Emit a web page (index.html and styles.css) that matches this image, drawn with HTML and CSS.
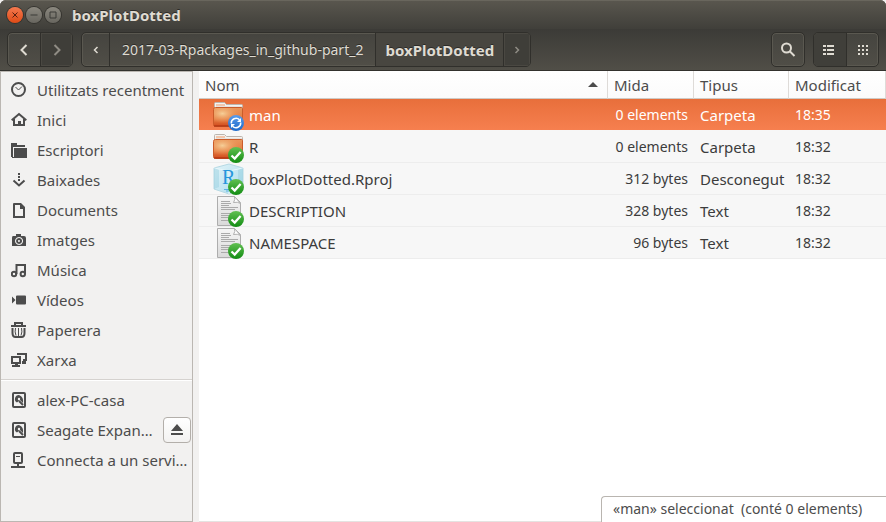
FILE: index.html
```html
<!DOCTYPE html>
<html lang="ca">
<head>
<meta charset="utf-8">
<title>boxPlotDotted</title>
<link rel="stylesheet" href="styles.css">
</head>
<body>
<svg class="defs" aria-hidden="true">
  <defs>
    <linearGradient id="g-front" x1="0" y1="0" x2="0" y2="1"><stop offset="0" stop-color="#e9975c"/><stop offset=".6" stop-color="#e57c42"/><stop offset="1" stop-color="#d04a1c"/></linearGradient>
    <radialGradient id="g-glow" cx=".3" cy=".35" r=".6"><stop offset="0" stop-color="#f5cf98"/><stop offset="1" stop-color="#f0a060" stop-opacity="0"/></radialGradient>
    <linearGradient id="g-green" x1="0" y1="0" x2="0" y2="1"><stop offset="0" stop-color="#62c052"/><stop offset="1" stop-color="#118c12"/></linearGradient>
    <linearGradient id="g-blue" x1="0" y1="0" x2="0" y2="1"><stop offset="0" stop-color="#5a9cec"/><stop offset="1" stop-color="#1e69c8"/></linearGradient>
    <linearGradient id="g-page" x1="0" y1="0" x2="0" y2="1"><stop offset="0" stop-color="#f6f6f6"/><stop offset="1" stop-color="#d9d9d9"/></linearGradient>
    <linearGradient id="g-cube" x1="0" y1="0" x2="1" y2="1"><stop offset="0" stop-color="#e2f3f8"/><stop offset="1" stop-color="#a9dced"/></linearGradient>
    <symbol id="ok" viewBox="0 0 16 16"><circle cx="8" cy="8" r="8" fill="url(#g-green)"/><path d="M3.500 8.500 6.700 11.500 12.600 5" fill="none" stroke="#fff" stroke-width="2.300"/></symbol>
    <symbol id="sync" viewBox="0 0 16 16"><circle cx="8" cy="8" r="8" fill="url(#g-blue)"/><path d="M3.300 8.500A4.800 4.800 0 0 1 11.500 4.700M12.700 7.500A4.800 4.800 0 0 1 4.500 11.300" fill="none" stroke="#fff" stroke-width="1.500"/><path d="M13 3v4H9zM3 13V9h4z" fill="#fff"/></symbol>
    <symbol id="folder" viewBox="0 0 32 32"><path d="M2.500 14V4.500q0-1 1-1h9l2 2h15q1 0 1 1V14" fill="#f4f2ef" stroke="#bcb5ae"/><path d="M4 6h9" stroke="#ef9a6a"/><path d="M4 8h26" stroke="#d9d3cd"/><path d="M1.500 10.500q0-2 2-2h26q1 0 1 1v16q0 2-2 2h-25q-2 0-2-2z" fill="url(#g-front)" stroke="#cb5c2a"/><path d="M2 9h28v16H2z" fill="url(#g-glow)"/><path d="M2 27h28" stroke="#a82a0c"/></symbol>
    <symbol id="page" viewBox="0 0 32 32"><path d="M5.500 1.500h17l6 6v23h-23z" fill="url(#g-page)" stroke="#adadad"/><path d="M22.500 1.500q1 3-1 6 4-1 7 1z" fill="#fff" stroke="#b0b0b0"/><path d="M9 6.500h9M9 8.500h10M9 10.500h8M9 12.500h17M9 14.500h14M9 18.500h15M9 20.500h12M9 22.500h14M9 25.500h9" stroke="#aaa"/></symbol>
    <symbol id="rproj" viewBox="0 0 32 32"><path d="M2 5 17 1l14 4v20l-14 6L2 26z" fill="url(#g-cube)" stroke="#b6d9e4"/><path d="M2 5l15 3 14-3M17 8v23" fill="none" stroke="#e8f7fb"/><path d="M2 5l5 2v17l-5 2zM31 5l-5 2v17l5 1z" fill="#8ecbdd" opacity=".4"/><text x="10" y="21" class="cube-letter">R</text><path d="M12 26.500h6M14 28h3" stroke="#5cb0df"/></symbol>
    <symbol id="disk" viewBox="0 0 16 16"><path fill-rule="evenodd" fill="currentColor" d="M3 0h10q2 0 2 2v12q0 2-2 2H3q-2 0-2-2V2Q1 0 3 0zM3 2v12h10V2z"/><path d="M8 3a4 4 0 0 0-2 7.500l3-2.500 3 3q1-6-4-8z" fill="currentColor"/><circle cx="8" cy="7" r="1.200" fill="#f2f1f0"/><path d="m8 9 4 4" stroke="currentColor" stroke-width="2"/></symbol>
  </defs>
</svg>

<header class="chrome">
  <div class="titlebar">
    <button class="win close" aria-label="Tanca"><svg viewBox="0 0 16 16"><path d="m5.500 5.500 5 5m0-5-5 5"/></svg></button>
    <button class="win" aria-label="Minimitza"><svg viewBox="0 0 16 16"><path d="M4.500 8h7"/></svg></button>
    <button class="win" aria-label="Maximitza"><svg viewBox="0 0 16 16"><path d="M5 5h6v6H5z"/></svg></button>
    <h1>boxPlotDotted</h1>
  </div>
  <nav class="toolbar" aria-label="Navegació">
    <div class="group">
      <button class="square" aria-label="Enrere"><svg viewBox="0 0 16 16"><path class="line" d="M10.500 3 5.500 8l5 5"/></svg></button>
      <button class="square dark" aria-label="Endavant"><svg viewBox="0 0 16 16"><path class="line" d="m5.500 3 5 5-5 5"/></svg></button>
    </div>
    <div class="group path">
      <button class="step" aria-label="Anteriors"><svg viewBox="0 0 16 16"><path class="thin" d="M9.500 5 6.500 8l3 3"/></svg></button>
      <button class="crumb parent">2017-03-Rpackages_in_github-part_2</button>
      <button class="crumb current">boxPlotDotted</button>
      <button class="step dark" aria-label="Següents"><svg viewBox="0 0 16 16"><path class="thin" d="m6.500 5 3 3-3 3"/></svg></button>
    </div>
    <div class="group search"><button class="square" aria-label="Cerca"><svg viewBox="0 0 16 16"><circle cx="6.500" cy="6" r="4.500" class="line"/><path class="line" d="m9.500 9 5 5"/></svg></button></div>
    <div class="group">
      <button class="square pressed" aria-label="Llista"><svg viewBox="0 0 16 16"><path d="M1 3h3v2H1zM5 3h7v2H5zM1 7h3v2H1zM5 7h7v2H5zM1 11h3v2H1zM5 11h7v2H5z"/></svg></button>
      <button class="square" aria-label="Icones"><svg viewBox="0 0 16 16"><path d="M3 3h2v2H3zM7 3h2v2H7zM11 3h2v2h-2zM3 7h2v2H3zM7 7h2v2H7zM11 7h2v2h-2zM3 11h2v2H3zM7 11h2v2H7zM11 11h2v2h-2z"/></svg></button>
    </div>
  </nav>
</header>

<div class="content">
  <aside class="sidebar">
    <ul>
      <li><a href="#"><svg viewBox="0 0 16 16"><circle cx="7.500" cy="7.500" r="6.500" class="o2"/><path class="o1" d="m4.500 5 3 3 3.500-3.500"/></svg>Utilitzats recentment</a></li>
      <li><a href="#"><svg viewBox="0 0 16 16"><path class="o2" d="M.7 8.300 8 2l7.300 6.300"/><path d="M2 7h2v5h3V9h3v3h2V7h2v7H2z"/></svg>Inici</a></li>
      <li><a href="#"><svg viewBox="0 0 16 16"><path d="M0 1h6v2h8v2H2v10H0z"/><path d="M3 6h13v10H1v-1h2z"/></svg>Escriptori</a></li>
      <li><a href="#"><svg viewBox="0 0 16 16"><path d="M7 1h2v2H7zM7 4h2v2H7zM7 7h2v2H7z"/><path class="o2" d="M2.500 8.500 8 13.500l5.500-5"/></svg>Baixades</a></li>
      <li><a href="#"><svg viewBox="0 0 16 16"><path fill-rule="evenodd" d="M3 1h7l4 4v11H2V2q0-1 1-1zM4 3v11h8V7H9V3z"/></svg>Documents</a></li>
      <li><a href="#"><svg viewBox="0 0 16 16"><path fill-rule="evenodd" d="M2 4h3V2h5v2h3q2 0 2 2v8H1V6q0-2 1-2zm6 1a4 4 0 1 0 .1 0z"/><path fill-rule="evenodd" d="M8 6a3 3 0 1 0 .1 0zm0 2a1 1 0 1 1-.1 0z"/></svg>Imatges</a></li>
      <li><a href="#"><svg viewBox="0 0 16 16"><circle cx="3" cy="12" r="2.200" class="o2"/><circle cx="11.800" cy="12" r="2.200" class="o2"/><path class="o2" d="M5.500 12V3H14v9"/></svg>Música</a></li>
      <li><a href="#"><svg viewBox="0 0 16 16"><path d="M6 3.500h8q1 0 1 1v7q0 1-1 1H6q-1 0-1-1v-7q0-1 1-1zM1 4.500 4.500 8 1 11.500z"/></svg>Vídeos</a></li>
      <li><a href="#"><svg viewBox="0 0 16 16"><path class="o2" d="M0 4h15M4 3.500V1h7v2.500M1.500 6v5q0 4 3 4h6q3 0 3-4V6"/><path class="o1" d="M4.500 6q-1 4 .5 7.500M7.500 6v8M10.500 6q1 4-.5 7.500"/></svg>Paperera</a></li>
      <li><a href="#"><svg viewBox="0 0 16 16"><path class="o2" d="M1 5h8v6H1zM7 3V2h8v6h-3"/><path d="M4 11h3v2h2v2H1v-2h3zM11 9h4v3h-4z"/></svg>Xarxa</a></li>
    </ul>
    <ul>
      <li><a href="#"><svg viewBox="0 0 16 16"><use href="#disk"/></svg>alex-PC-casa</a></li>
      <li><a href="#"><svg viewBox="0 0 16 16"><use href="#disk"/></svg>Seagate Expan…</a><button class="eject" aria-label="Expulsa"><svg viewBox="0 0 16 16"><path d="M8 2 14 9H2zM2 11h12v2H2z"/></svg></button></li>
      <li><a href="#"><svg viewBox="0 0 16 16"><rect x="3" y="1" width="8" height="10" rx="1" class="o2"/><path d="M5 4h4v1H5zM6 11h2v3h6v2H0v-2h6z"/></svg>Connecta a un servi…</a></li>
    </ul>
  </aside>
  <main class="files">
    <table>
      <colgroup><col><col class="c-size"><col class="c-type"><col class="c-date"></colgroup>
      <thead><tr>
        <th scope="col" aria-sort="ascending"><div class="sort">Nom<svg viewBox="0 0 10 6"><path d="M5 0l5 5H0z"/></svg></div></th>
        <th scope="col">Mida</th><th scope="col">Tipus</th><th scope="col">Modificat</th>
      </tr></thead>
      <tbody>
        <tr class="selected"><td><div class="name"><svg viewBox="0 0 32 32"><use href="#folder"/><use href="#sync" x="16" y="16" width="16" height="16"/></svg>man</div></td><td class="size">0 elements</td><td>Carpeta</td><td class="date">18:35</td></tr>
        <tr><td><div class="name"><svg viewBox="0 0 32 32"><use href="#folder"/><use href="#ok" x="16" y="16" width="16" height="16"/></svg>R</div></td><td class="size">0 elements</td><td>Carpeta</td><td class="date">18:32</td></tr>
        <tr><td><div class="name"><svg viewBox="0 0 32 32"><use href="#rproj"/><use href="#ok" x="16" y="16" width="16" height="16"/></svg>boxPlotDotted.Rproj</div></td><td class="size">312 bytes</td><td>Desconegut</td><td class="date">18:32</td></tr>
        <tr><td><div class="name"><svg viewBox="0 0 32 32"><use href="#page"/><use href="#ok" x="16" y="16" width="16" height="16"/></svg>DESCRIPTION</div></td><td class="size">328 bytes</td><td>Text</td><td class="date">18:32</td></tr>
        <tr><td><div class="name"><svg viewBox="0 0 32 32"><use href="#page"/><use href="#ok" x="16" y="16" width="16" height="16"/></svg>NAMESPACE</div></td><td class="size">96 bytes</td><td>Text</td><td class="date">18:32</td></tr>
      </tbody>
    </table>
    <div class="status" role="status">«man» seleccionat&nbsp; (conté 0 elements)</div>
  </main>
</div>
</body>
</html>
```
FILE: styles.css
```css
* { box-sizing: border-box; }
body {
  margin: 0;
  min-height: 100vh;
  display: flex;
  flex-direction: column;
  background: #f2f1f0;
  color: #3c3c3c;
  font: 15px/20px "Noto Sans", "Open Sans", sans-serif;
}
button { font: inherit; color: inherit; border: 0; padding: 0; margin: 0; background: none; }
svg { display: block; flex: none; fill: currentColor; }
.defs { position: absolute; width: 0; height: 0; }
.cube-letter { font: 20px "Liberation Serif", serif; fill: #2596dc; }

.chrome { color: #dfdbd2; border-bottom: 1px solid #33322e; background: #3c3b37; border-radius: 6px 6px 0 0; }
.titlebar {
  height: 29px;
  display: flex;
  align-items: center;
  gap: 3px;
  padding-left: 7px;
  border-top: 1px solid #69665d;
  border-radius: 6px 6px 0 0;
  background: linear-gradient(#59564e, #403f3a);
}
.titlebar h1 { margin: 0 0 0 8px; font-size: 15px; line-height: 20px; text-shadow: 0 -1px #2c2b28; }
.win { width: 16px; height: 16px; border-radius: 8px; background: linear-gradient(#8b887f, #68665f); box-shadow: 0 0 0 1px #35342f; color: #3b3a36; }
.win svg { width: 16px; height: 16px; fill: none; stroke: currentColor; }
.win.close { background: linear-gradient(#f5794f, #df4b16); color: #572010; }

.toolbar { display: flex; align-items: center; gap: 8px; padding: 3px 7px; height: 41px; background: linear-gradient(#3c3b37, #504e47); }
.group {
  display: flex;
  height: 35px;
  border: 1px solid #302f2b;
  border-radius: 5px;
  overflow: hidden;
  background: linear-gradient(#45443f, #504e47);
  box-shadow: inset 0 0 0 1px #5a5850;
}
.group button { display: flex; align-items: center; justify-content: center; }
.group button + button { border-left: 1px solid #302f2b; }
.group svg { width: 16px; height: 16px; }
.square { width: 32px; }
.step { width: 27px; }
.crumb { padding: 0 9px; text-shadow: 0 -1px #2c2b28; }
.group .parent { padding: 0 12px; font-size: 14px; }
.crumb.current { font-weight: bold; background: #484640; }
.group .dark { background: #3f3e39; color: #8f8c84; box-shadow: inset 0 0 0 1px #4a4842; }
.pressed { background: #403f3a; }
.search { margin-left: auto; }
.line { fill: none; stroke: currentColor; stroke-width: 2; }
.thin { fill: none; stroke: currentColor; stroke-width: 1.5; }

.content { flex: 1; display: flex; gap: 6px; }
.sidebar { flex: 0 0 193px; border: 1px solid #bbb7b2; color: #4c4c4c; }
.sidebar ul { list-style: none; margin: 0; padding: 3px 0 4px; }
.sidebar ul + ul { border-top: 1px solid #d5d2cf; box-shadow: inset 0 1px #fff; padding-top: 5px; }
.sidebar li { height: 30px; display: flex; align-items: center; padding: 0 1px 0 10px; }
.sidebar a { flex: 1; min-width: 0; display: flex; align-items: center; gap: 10px; color: inherit; text-decoration: none; white-space: nowrap; }
.sidebar svg { width: 16px; height: 16px; }
.o1 { fill: none; stroke: currentColor; }
.o2 { fill: none; stroke: currentColor; stroke-width: 2; }
.eject { width: 28px; height: 26px; display: flex; align-items: center; justify-content: center; border: 1px solid #b3afaa; border-radius: 4px; background: linear-gradient(#fff, #f3f2f1); }

.files { flex: 1; min-width: 0; position: relative; background: #fff; border-bottom: 1px solid #e5e3e1; }
table { width: 100%; table-layout: fixed; border-collapse: separate; border-spacing: 0; }
.c-size { width: 86px; }
.c-type { width: 95px; }
.c-date { width: 97px; }
th, td { padding: 0 6px; text-align: left; white-space: nowrap; }
th { height: 28px; font-weight: normal; color: #4c4c4c; border-right: 1px solid #dedbd8; border-bottom: 1px solid #cfcac5; background: linear-gradient(#fff, #fbfbfb); }
td { height: 32px; background: #f7f7f7; border-bottom: 1px solid #ededed; }
td.size, td.date { font-size: 14px; }
td.size { text-align: right; }
.selected td { color: #fff; background: linear-gradient(#e86f3b, #f67f4f); border-bottom-color: #f7f7f7; }
.sort { display: flex; align-items: center; justify-content: space-between; padding-right: 3px; }
.sort svg { width: 10px; height: 6px; }
.name { display: flex; align-items: center; gap: 5px; padding-left: 7px; height: 31px; }
.name svg { width: 32px; height: 32px; }
.status { position: absolute; right: 0; bottom: -1px; width: 285px; padding: 2px 11px 3px; border: 1px solid #b9b5b0; border-width: 1px 0 0 1px; border-radius: 4px 0 0; background: #fff; color: #4c4c4c; font-size: 14px; white-space: nowrap; }
```
